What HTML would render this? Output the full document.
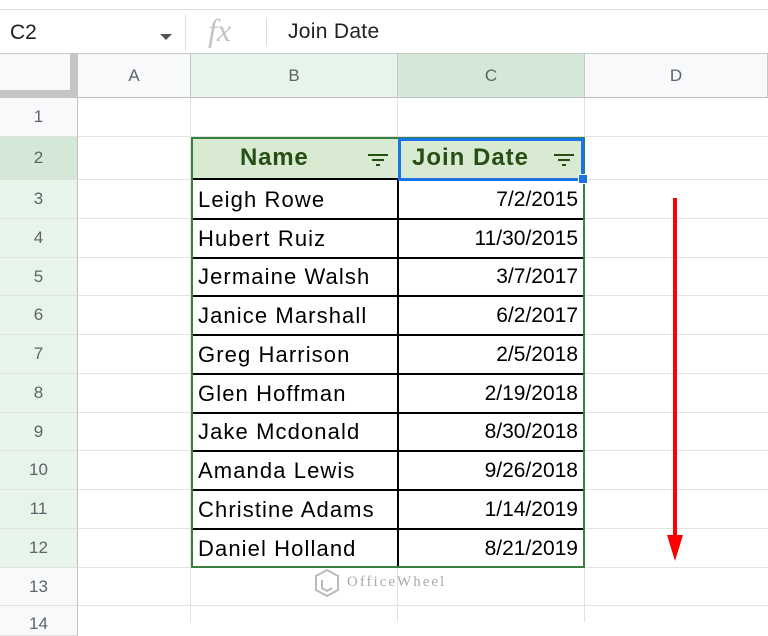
<!DOCTYPE html>
<html><head><style>
body{margin:0;width:768px;height:622px;overflow:hidden;background:#fff;font-family:"Liberation Sans",Arial,sans-serif;position:relative}
div{position:absolute;box-sizing:border-box}
.t{font-size:22px;color:#000;line-height:38px}
.d{font-size:21px;left:400px;width:178px;text-align:right}
.n{letter-spacing:1.1px}
.rh{left:0;width:78px;text-align:center;font-size:17px;color:#5f6368;background:#f8f9fa;border-right:1px solid #c0c0c0;border-bottom:1px solid #e0e0e0;display:flex;align-items:center;justify-content:center}
.hl{left:78px;width:690px;height:1px;background:#e2e2e2}
.vl{top:98px;height:524px;width:1px;background:#e2e2e2}
.ch{top:54px;height:44px;font-size:17px;color:#5f6368;display:flex;align-items:center;justify-content:center;border-right:1px solid #c8c8c8;border-bottom:1px solid #c0c0c0;background:#f8f9fa}
</style></head><body>
<div style="left:0;top:0;width:768px;height:10px;background:#fff;border-bottom:1px solid #dadce0"></div>
<div style="left:0;top:10px;width:768px;height:44px;border-bottom:1px solid #c8c8c8">
 <div style="left:10px;top:11px;font-size:21px;color:#202124">C2</div>
 <div style="left:160px;top:24px;width:0;height:0;border-left:6px solid transparent;border-right:6px solid transparent;border-top:6px solid #555"></div>
 <div style="left:185px;top:4px;width:1px;height:36px;background:#dadce0"></div>
 <div style="left:208px;top:2px;font-family:'Liberation Serif',serif;font-style:italic;font-size:32px;color:#c4c4c4">fx</div>
 <div style="left:266px;top:8px;width:1px;height:28px;background:#dadce0"></div>
 <div style="left:288px;top:10px;font-size:21px;color:#202124;letter-spacing:0.3px">Join Date</div>
</div>
<div style="left:0;top:54px;width:78px;height:44px;background:#f8f9fa;border-right:8px solid #c4c4c4;border-bottom:8px solid #c4c4c4"></div>
<div class="ch" style="left:78px;width:113px">A</div>
<div class="ch" style="left:191px;width:207px;background:#e6f4ea">B</div>
<div class="ch" style="left:398px;width:187px;background:#d3e8d6">C</div>
<div class="ch" style="left:585px;width:183px">D</div>
<div class="rh" style="top:98px;height:39px">1</div>
<div class="rh" style="top:137px;height:43px;background:#d3e8d6">2</div>
<div class="rh" style="top:180px;height:39px;background:#e6f4ea">3</div>
<div class="rh" style="top:219px;height:39px;background:#e6f4ea">4</div>
<div class="rh" style="top:258px;height:38px;background:#e6f4ea">5</div>
<div class="rh" style="top:296px;height:39px;background:#e6f4ea">6</div>
<div class="rh" style="top:335px;height:39px;background:#e6f4ea">7</div>
<div class="rh" style="top:374px;height:39px;background:#e6f4ea">8</div>
<div class="rh" style="top:413px;height:38px;background:#e6f4ea">9</div>
<div class="rh" style="top:451px;height:39px;background:#e6f4ea">10</div>
<div class="rh" style="top:490px;height:39px;background:#e6f4ea">11</div>
<div class="rh" style="top:529px;height:39px;background:#e6f4ea">12</div>
<div class="rh" style="top:568px;height:38px">13</div>
<div class="rh" style="top:606px;height:30px;align-items:flex-start;padding-top:8px">14</div>
<div class="hl" style="top:136px"></div><div class="hl" style="top:179px"></div><div class="hl" style="top:567px"></div><div class="hl" style="top:605px"></div>
<div class="hl" style="top:218px;left:585px;width:183px"></div><div class="hl" style="top:257px;left:585px;width:183px"></div><div class="hl" style="top:295px;left:585px;width:183px"></div><div class="hl" style="top:334px;left:585px;width:183px"></div><div class="hl" style="top:373px;left:585px;width:183px"></div><div class="hl" style="top:412px;left:585px;width:183px"></div><div class="hl" style="top:450px;left:585px;width:183px"></div><div class="hl" style="top:489px;left:585px;width:183px"></div><div class="hl" style="top:528px;left:585px;width:183px"></div>
<div class="hl" style="top:218px;width:113px"></div><div class="hl" style="top:257px;width:113px"></div><div class="hl" style="top:295px;width:113px"></div><div class="hl" style="top:334px;width:113px"></div><div class="hl" style="top:373px;width:113px"></div><div class="hl" style="top:412px;width:113px"></div><div class="hl" style="top:450px;width:113px"></div><div class="hl" style="top:489px;width:113px"></div><div class="hl" style="top:528px;width:113px"></div>
<div class="vl" style="left:190px"></div><div class="vl" style="left:397px"></div><div class="vl" style="left:584px"></div>
<div style="left:191px;top:137px;width:394px;height:431px;border:2px solid #38803f;background:#fff"></div>
<div style="left:193px;top:139px;width:390px;height:41px;background:#d9ead3;border-bottom:2px solid #000"></div>
<div style="left:397px;top:180px;width:2px;height:386px;background:#000"></div>
<div style="left:240px;top:139px;font-size:24px;font-weight:bold;color:#274e13;line-height:38px;letter-spacing:0.8px">Name</div>
<div style="left:398px;top:138px;width:186px;height:43px;border:3px solid #1a73e8"></div>
<div style="left:412px;top:139px;font-size:24px;font-weight:bold;color:#274e13;line-height:38px;letter-spacing:1px">Join Date</div>
<svg style="position:absolute;left:367px;top:152px" width="22" height="16"><path d="M1 3h20M5 8h12M9 13h4" stroke="#274e13" stroke-width="2"/></svg>
<svg style="position:absolute;left:553px;top:152px" width="22" height="16"><path d="M1 3h20M5 8h12M9 13h4" stroke="#274e13" stroke-width="2"/></svg>
<div style="left:578px;top:174px;width:10px;height:10px;background:#1a73e8;border:1px solid #fff"></div>
<div style="left:193px;top:218px;width:390px;height:2px;background:#000"></div>
<div style="left:193px;top:257px;width:390px;height:2px;background:#000"></div>
<div style="left:193px;top:295px;width:390px;height:2px;background:#000"></div>
<div style="left:193px;top:334px;width:390px;height:2px;background:#000"></div>
<div style="left:193px;top:373px;width:390px;height:2px;background:#000"></div>
<div style="left:193px;top:412px;width:390px;height:2px;background:#000"></div>
<div style="left:193px;top:450px;width:390px;height:2px;background:#000"></div>
<div style="left:193px;top:489px;width:390px;height:2px;background:#000"></div>
<div style="left:193px;top:528px;width:390px;height:2px;background:#000"></div>
<div class="t n" style="left:198px;top:181px">Leigh Rowe</div><div class="t d" style="top:181px">7/2/2015</div>
<div class="t n" style="left:198px;top:220px">Hubert Ruiz</div><div class="t d" style="top:220px">11/30/2015</div>
<div class="t n" style="left:198px;top:258px">Jermaine Walsh</div><div class="t d" style="top:258px">3/7/2017</div>
<div class="t n" style="left:198px;top:297px">Janice Marshall</div><div class="t d" style="top:297px">6/2/2017</div>
<div class="t n" style="left:198px;top:336px">Greg Harrison</div><div class="t d" style="top:336px">2/5/2018</div>
<div class="t n" style="left:198px;top:375px">Glen Hoffman</div><div class="t d" style="top:375px">2/19/2018</div>
<div class="t n" style="left:198px;top:413px">Jake Mcdonald</div><div class="t d" style="top:413px">8/30/2018</div>
<div class="t n" style="left:198px;top:452px">Amanda Lewis</div><div class="t d" style="top:452px">9/26/2018</div>
<div class="t n" style="left:198px;top:491px">Christine Adams</div><div class="t d" style="top:491px">1/14/2019</div>
<div class="t n" style="left:198px;top:530px">Daniel Holland</div><div class="t d" style="top:530px">8/21/2019</div>
<div style="left:673px;top:198px;width:4px;height:340px;background:#f00"></div>
<div style="left:667px;top:535px;width:0;height:0;border-left:8px solid transparent;border-right:8px solid transparent;border-top:26px solid #f00"></div>
<svg style="position:absolute;left:313px;top:568px" width="28" height="32"><path d="M14 2l11 6v14l-11 6-11-6V8z" fill="none" stroke="#bbb" stroke-width="2"/><path d="M9 12v8l5 3 5-3" fill="none" stroke="#bbb" stroke-width="2"/></svg>
<div style="left:347px;top:574px;font-family:'Liberation Serif',serif;font-size:15px;letter-spacing:2px;color:#aaa">OfficeWheel</div>
</body></html>
